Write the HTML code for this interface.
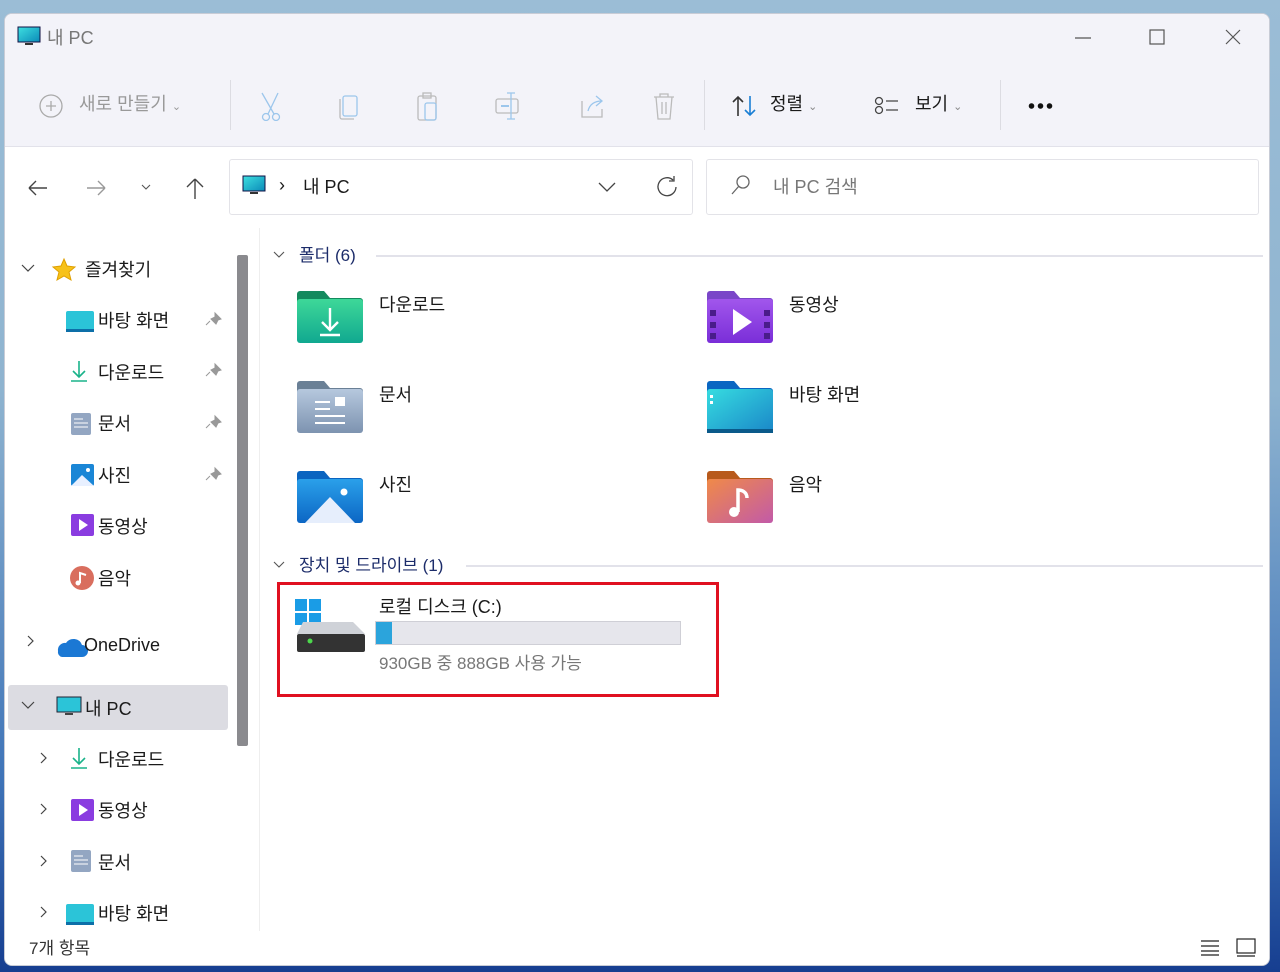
<!DOCTYPE html>
<html><head><meta charset="utf-8">
<style>
*{margin:0;padding:0;box-sizing:border-box}
body{width:1280px;height:972px;overflow:hidden;background:linear-gradient(180deg,#9bbdd6 0%,#8fb4d0 40%,#3f74b8 80%,#163e90 100%);font-family:"Liberation Sans","Noto Sans CJK KR",sans-serif;position:relative;color:#1a1a1a}
.a{position:absolute}
.win{position:absolute;left:4px;top:13px;width:1266px;height:953px;background:#fff;border-radius:8px;overflow:hidden;border:1px solid #c8ccd6}
.top{position:absolute;left:0;top:0;width:100%;height:133px;background:#f3f3f9;border-bottom:1px solid #e2e2ea}
.t{position:absolute;font-size:18px;white-space:nowrap;line-height:1}
.g{color:#8a8a8a}
.sep{position:absolute;width:1px;background:#dcdce2}
</style></head><body>
<div class="win">
 <div class="top">
  <svg class="a" style="left:12px;top:12px" width="24" height="22"><defs><linearGradient id="sc" x1="0" y1="0" x2="1" y2="1"><stop offset="0" stop-color="#3ee0e0"/><stop offset="1" stop-color="#0a8ab8"/></linearGradient></defs><rect x="1" y="1" width="22" height="15" fill="url(#sc)" stroke="#114" stroke-width="1"/><rect x="8" y="17" width="8" height="2" fill="#333"/></svg>
  <div class="t g" style="left:42px;top:15px;color:#777">내 PC</div>
  <svg class="a" style="left:1070px;top:14px" width="180" height="20" stroke="#555" fill="none" stroke-width="1.2"><line x1="0" y1="10" x2="16" y2="10"/><rect x="75" y="2" width="14" height="14"/><path d="M151 2l14 14M165 2l-14 14"/></svg>
  <svg class="a" style="left:33px;top:79px" width="26" height="26" stroke="#aaa" fill="none" stroke-width="1.3"><circle cx="13" cy="13" r="11"/><path d="M13 8v10M8 13h10"/></svg>
  <div class="t" style="left:74px;top:81px;color:#999">새로 만들기 <span style="font-size:11px">⌄</span></div>
  <div class="sep" style="left:225px;top:66px;height:50px"></div>
  <svg class="a" style="left:255px;top:77px" width="420" height="30" fill="none" stroke-width="1.3">
   <g stroke="#9cc6ec"><circle cx="6" cy="26" r="3.5"/><circle cx="16" cy="26" r="3.5"/><path d="M2 2l12 21M18 2L8 23"/></g>
   <g><rect x="83" y="5" width="14" height="20" rx="2" stroke="#9cc6ec"/><path d="M80 8v18a2 2 0 0 0 2 2h12" stroke="#bbb"/></g>
   <g><rect x="158" y="5" width="18" height="24" rx="2" stroke="#bbb"/><rect x="165" y="12" width="11" height="17" rx="2" stroke="#9cc6ec"/><rect x="163" y="2" width="8" height="5" stroke="#bbb"/></g>
   <g><rect x="236" y="8" width="22" height="14" rx="2" stroke="#bbb"/><path d="M251 2v26M247 2h8M247 28h8" stroke="#9cc6ec"/><path d="M241 15h8" stroke="#9cc6ec" stroke-width="2"/></g>
   <g><path d="M322 10v16h20v-8" stroke="#bbb"/><path d="M328 20c2-8 8-10 14-10M336 5l6 5-6 5" stroke="#9cc6ec"/></g>
   <g stroke="#bbb"><path d="M394 6h20M400 6V3h8v3M396 6l2 22h12l2-22M402 11v12M406 11v12"/></g>
  </svg>
  <div class="sep" style="left:699px;top:66px;height:50px"></div>
  <svg class="a" style="left:726px;top:80px" width="28" height="24" fill="none" stroke-width="1.6"><path d="M7 22V3M2 8l5-5 5 5" stroke="#333"/><path d="M19 2v19M14 16l5 5 5-5" stroke="#1a7fd4"/></svg>
  <div class="t" style="left:765px;top:81px">정렬 <span style="font-size:11px;color:#888">⌄</span></div>
  <svg class="a" style="left:868px;top:82px" width="28" height="20" fill="none" stroke="#444" stroke-width="1.3"><circle cx="6" cy="5" r="3.5"/><circle cx="6" cy="14" r="3.5"/><path d="M13 5h12M13 14h12"/></svg>
  <div class="t" style="left:910px;top:81px">보기 <span style="font-size:11px;color:#888">⌄</span></div>
  <div class="sep" style="left:995px;top:66px;height:50px"></div>
  <div class="a" style="left:1022px;top:89px;width:26px;height:6px;background:radial-gradient(circle,#111 2.5px,transparent 3px) 0 0/9px 6px"></div>
 </div>
 <svg class="a" style="left:20px;top:162px" width="180" height="24" fill="none" stroke-width="1.4"><path d="M4 12h18M4 12l7-7M4 12l7 7" stroke="#444"/><path d="M62 12h18M80 12l-7-7M80 12l-7 7" stroke="#999"/><path d="M117 9l4 4 4-4" stroke="#555" stroke-width="1.1"/><path d="M170 3v20M170 3l-8 8M170 3l8 8" stroke="#444"/></svg>
 <div class="a" style="left:224px;top:145px;width:464px;height:56px;border:1px solid #e3e3e8;border-radius:3px"></div>
 <svg class="a" style="left:237px;top:161px" width="24" height="22"><rect x="1" y="1" width="22" height="15" fill="url(#sc)" stroke="#114"/><rect x="8" y="17" width="8" height="2" fill="#333"/></svg>
 <div class="t" style="left:274px;top:162px">›</div>
 <div class="t" style="left:298px;top:164px">내 PC</div>
 <svg class="a" style="left:590px;top:160px" width="90" height="26" fill="none" stroke="#444" stroke-width="1.3"><path d="M4 9l8 8 8-8"/><path d="M78 6a9 9 0 1 0 3 7M79 2v5h-5"/></svg>
 <div class="a" style="left:701px;top:145px;width:553px;height:56px;border:1px solid #e3e3e8;border-radius:3px"></div>
 <svg class="a" style="left:725px;top:160px" width="22" height="22" fill="none" stroke="#666" stroke-width="1.3"><circle cx="13" cy="8" r="6"/><path d="M9 12l-7 8"/></svg>
 <div class="t" style="left:768px;top:164px;color:#777">내 PC 검색</div>
 <div class="a" style="left:3px;top:671px;width:220px;height:45px;background:#dcdce2;border-radius:3px"></div>
 <div class="a" style="left:232px;top:241px;width:11px;height:491px;background:#8a8a8e;border-radius:2px"></div>
 <div class="a" style="left:254px;top:214px;width:1px;height:703px;background:#eee"></div>
 <svg class="a" style="left:-4px;top:217px" width="225" height="700" fill="none">
  <g stroke="#444" stroke-width="1.2"><path d="M21 34l6 6 6-6"/><path d="M27 405l5 5-5 5"/><path d="M21 471l6 6 6-6"/><path d="M40 522l5 5-5 5M40 573l5 5-5 5M40 625l5 5-5 5M40 676l5 5-5 5"/></g>
  <path d="M63 28l3 7 8 1-6 5 2 8-7-4-7 4 2-8-6-5 8-1z" fill="#f7c21a" stroke="#e0a000"/>
  <g fill="#999" stroke="#999"><path d="M214 82l6 6-3 1-2 4-5-5 4-2zM209 90l-4 4"/><path d="M214 133l6 6-3 1-2 4-5-5 4-2zM209 141l-4 4"/><path d="M214 185l6 6-3 1-2 4-5-5 4-2zM209 193l-4 4"/><path d="M214 237l6 6-3 1-2 4-5-5 4-2zM209 245l-4 4"/></g>
  <rect x="65" y="80" width="28" height="20" rx="2" fill="#2bc4d8"/><rect x="65" y="98" width="28" height="3" fill="#0d6fa8"/>
  <rect x="65" y="673" width="28" height="20" rx="2" fill="#2bc4d8"/><rect x="65" y="691" width="28" height="3" fill="#0d6fa8"/>
  <g stroke="#1ab38a" stroke-width="1.6"><path d="M78 130v16M72 140l6 6 6-6M70 150h16"/><path d="M78 517v16M72 527l6 6 6-6M70 537h16"/></g>
  <g><rect x="70" y="182" width="20" height="22" rx="2" fill="#93a6c2"/><path d="M73 188h9M73 192h14M73 196h14" stroke="#fff"/><rect x="70" y="619" width="20" height="22" rx="2" fill="#93a6c2"/><path d="M73 625h9M73 629h14M73 633h14" stroke="#fff"/></g>
  <rect x="70" y="233" width="23" height="22" rx="2" fill="#1a86d6"/><path d="M70 255l11-11 12 11z" fill="#e8f0ff"/><circle cx="87" cy="239" r="2" fill="#fff"/>
  <g><rect x="70" y="283" width="23" height="22" rx="2" fill="#8a3ce0"/><path d="M78 288v12l9-6z" fill="#fff"/><rect x="70" y="568" width="23" height="22" rx="2" fill="#8a3ce0"/><path d="M78 573v12l9-6z" fill="#fff"/></g>
  <circle cx="81" cy="347" r="12" fill="#d96e5e"/><path d="M79 352v-10l6 2" stroke="#fff" stroke-width="2"/><circle cx="77" cy="352" r="2.5" fill="#fff"/>
  <path d="M57 420a7 7 0 0 1 8-8 9 9 0 0 1 16 2 6 6 0 0 1 0 12H61a5 5 0 0 1-4-6z" fill="#1b78d4"/>
  <rect x="56" y="466" width="24" height="15" fill="#2bc4d8" stroke="#223"/><rect x="64" y="482" width="8" height="2" fill="#444"/>
 </svg>
 <div class="t" style="left:80px;top:247px">즐겨찾기</div>
 <div class="t" style="left:93px;top:298px">바탕 화면</div>
 <div class="t" style="left:93px;top:350px">다운로드</div>
 <div class="t" style="left:93px;top:401px">문서</div>
 <div class="t" style="left:93px;top:453px">사진</div>
 <div class="t" style="left:93px;top:504px">동영상</div>
 <div class="t" style="left:93px;top:556px">음악</div>
 <div class="t" style="left:79px;top:622px">OneDrive</div>
 <div class="t" style="left:80px;top:686px">내 PC</div>
 <div class="t" style="left:93px;top:737px">다운로드</div>
 <div class="t" style="left:93px;top:788px">동영상</div>
 <div class="t" style="left:93px;top:840px">문서</div>
 <div class="t" style="left:93px;top:891px">바탕 화면</div>
 <div class="a" style="left:0;top:917px;width:1266px;height:40px;background:#fff"></div>
 <div class="t" style="left:24px;top:926px;font-size:17px;color:#333">7개 항목</div>
 <svg class="a" style="left:1192px;top:922px" width="62" height="22" fill="none" stroke="#222" stroke-width="1.2"><path d="M4 5h18M4 10h18M4 15h18M4 19h18"/><rect x="40" y="3" width="18" height="14"/><path d="M40 20h18"/></svg>
 <svg class="a" style="left:268px;top:233px" width="990" height="20" fill="none" stroke="#555" stroke-width="1.1"><path d="M1 5l5 5 5-5"/><line x1="103" y1="9" x2="990" y2="9" stroke="#e2e2ea" stroke-width="2"/></svg>
 <div class="t" style="left:294px;top:233px;font-size:17px;color:#1c2c6a">폴더 (6)</div>
 <svg class="a" style="left:268px;top:543px" width="990" height="20" fill="none" stroke="#555" stroke-width="1.1"><path d="M1 5l5 5 5-5"/><line x1="193" y1="9" x2="990" y2="9" stroke="#e2e2ea" stroke-width="2"/></svg>
 <div class="t" style="left:294px;top:543px;font-size:17px;color:#1c2c6a">장치 및 드라이브 (1)</div>
 <svg class="a" style="left:290px;top:276px" width="480" height="240">
  <defs>
   <linearGradient id="gg" x1="0" y1="0" x2="0" y2="1"><stop offset="0" stop-color="#3ed898"/><stop offset="1" stop-color="#10a890"/></linearGradient>
   <linearGradient id="pp" x1="0" y1="0" x2="0" y2="1"><stop offset="0" stop-color="#a156ec"/><stop offset="1" stop-color="#7a2ed8"/></linearGradient>
   <linearGradient id="dd" x1="0" y1="0" x2="0" y2="1"><stop offset="0" stop-color="#b6c8de"/><stop offset="1" stop-color="#7d93b0"/></linearGradient>
   <linearGradient id="bb" x1="0" y1="0" x2="1" y2="1"><stop offset="0" stop-color="#36dce0"/><stop offset="1" stop-color="#1a86c8"/></linearGradient>
   <linearGradient id="ph" x1="0" y1="0" x2="0" y2="1"><stop offset="0" stop-color="#2aa0ea"/><stop offset="1" stop-color="#0c66c4"/></linearGradient>
   <linearGradient id="mu" x1="0" y1="0" x2="1" y2="1"><stop offset="0" stop-color="#f08a48"/><stop offset="1" stop-color="#c25aa8"/></linearGradient>
  </defs>
  <path d="M2 4a3 3 0 0 1 3-3h24l6 7h30a3 3 0 0 1 3 3v10H2z" fill="#148a5e"/><rect x="2" y="9" width="66" height="44" rx="3" fill="url(#gg)"/>
  <path d="M35 18v22M27 32l8 8 8-8M25 45h20" stroke="#fff" stroke-width="2.4" fill="none"/>
  <path d="M412 4a3 3 0 0 1 3-3h24l6 7h30a3 3 0 0 1 3 3v10H412z" fill="#7a46c8"/><rect x="412" y="9" width="66" height="44" rx="3" fill="url(#pp)"/>
  <g fill="#4a1c8a"><rect x="415" y="20" width="6" height="6"/><rect x="415" y="32" width="6" height="6"/><rect x="415" y="43" width="6" height="6"/><rect x="469" y="20" width="6" height="6"/><rect x="469" y="32" width="6" height="6"/><rect x="469" y="43" width="6" height="6"/></g>
  <path d="M438 19v26l19-13z" fill="#fff"/>
  <path d="M2 94a3 3 0 0 1 3-3h24l6 7h30a3 3 0 0 1 3 3v10H2z" fill="#6a8096"/><rect x="2" y="99" width="66" height="44" rx="3" fill="url(#dd)"/>
  <g stroke="#fff" stroke-width="2"><path d="M20 112h15M20 119h15M20 126h30M20 133h30"/></g><rect x="40" y="107" width="10" height="9" fill="#fff"/>
  <path d="M412 94a3 3 0 0 1 3-3h24l6 7h30a3 3 0 0 1 3 3v10H412z" fill="#0a66c2"/><rect x="412" y="99" width="66" height="44" rx="3" fill="url(#bb)"/><rect x="412" y="139" width="66" height="4" fill="#0a5a8a"/>
  <rect x="415" y="105" width="3" height="3" fill="#fff"/><rect x="415" y="111" width="3" height="3" fill="#fff"/>
  <path d="M2 184a3 3 0 0 1 3-3h24l6 7h30a3 3 0 0 1 3 3v10H2z" fill="#0a64c0"/><rect x="2" y="189" width="66" height="44" rx="3" fill="url(#ph)"/>
  <path d="M10 233l25-26 25 26z" fill="#e6eefc"/><circle cx="49" cy="202" r="3.5" fill="#fff"/>
  <path d="M412 184a3 3 0 0 1 3-3h24l6 7h30a3 3 0 0 1 3 3v10H412z" fill="#b85a1c"/><rect x="412" y="189" width="66" height="44" rx="3" fill="url(#mu)"/>
  <path d="M443 222v-22c4 0 9 2 9 8" stroke="#fff" stroke-width="3.5" fill="none"/><circle cx="439" cy="222" r="5" fill="#fff"/>
 </svg>
 <div class="t" style="left:374px;top:282px">다운로드</div>
 <div class="t" style="left:784px;top:282px">동영상</div>
 <div class="t" style="left:374px;top:372px">문서</div>
 <div class="t" style="left:784px;top:372px">바탕 화면</div>
 <div class="t" style="left:374px;top:462px">사진</div>
 <div class="t" style="left:784px;top:462px">음악</div>
 <div class="a" style="left:272px;top:568px;width:442px;height:115px;border:3px solid #e01020"></div>
 <svg class="a" style="left:290px;top:583px" width="75" height="60">
  <g fill="#1a9ce6"><rect x="0" y="2" width="12" height="12"/><rect x="14" y="2" width="12" height="12"/><rect x="0" y="16" width="12" height="12"/><rect x="14" y="16" width="12" height="12"/></g>
  <path d="M8 25h50l12 12H2z" fill="#cfd2d8"/><rect x="2" y="37" width="68" height="18" rx="2" fill="#333"/><circle cx="15" cy="44" r="2.5" fill="#4cd84c"/>
 </svg>
 <div class="t" style="left:374px;top:584px">로컬 디스크 (C:)</div>
 <div class="a" style="left:370px;top:607px;width:306px;height:24px;background:#e6e6ec;border:1px solid #cfcfd6"></div>
 <div class="a" style="left:371px;top:608px;width:16px;height:22px;background:#2ba4dc"></div>
 <div class="t" style="left:374px;top:641px;font-size:17px;color:#777">930GB 중 888GB 사용 가능</div>
</div>
</body></html>
